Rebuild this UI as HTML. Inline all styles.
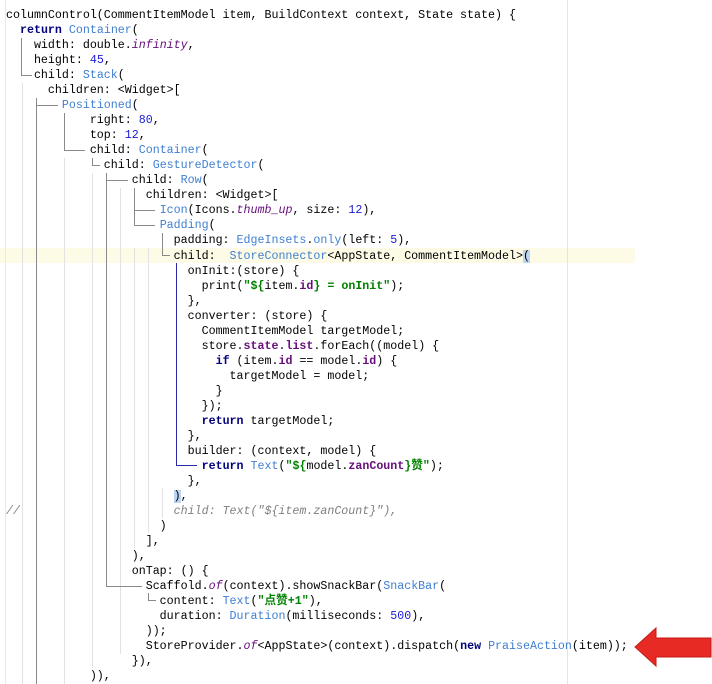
<!DOCTYPE html>
<html><head><meta charset="utf-8"><style>
html,body{margin:0;padding:0;background:#fff;width:712px;height:684px;overflow:hidden;position:relative}
pre{position:absolute;left:6px;top:8px;margin:0;font-family:"Liberation Mono","Noto Sans CJK SC",monospace;font-size:11.65px;line-height:15.03px;color:#000;z-index:2}
.k{color:#000080;font-weight:bold}.c{color:#3f7fd0}.n{color:#1a1ad8}.i{color:#660e7a;font-style:italic}
.f{color:#660e7a;font-weight:bold}.s{color:#008000;font-weight:bold}.cm{color:#808080;font-style:italic}
.b{background:#bcd6f2}
.g{position:absolute;width:1px;background:#e2e2e2;z-index:1}
.d{position:absolute;background:#8a8a8a;z-index:1}
.bl{position:absolute;background:#2a2aa8;z-index:1}
</style></head><body>
<div style="position:absolute;left:0;top:248px;width:635px;height:15px;background:#fdfbe6"></div>
<div style="position:absolute;left:567px;top:0;width:1px;height:684px;background:#e4e4e4"></div>
<div style="position:absolute;left:5px;top:0;width:1px;height:684px;background:#e8e8e8"></div>
<div class="g" style="left:22px;top:83px;height:601px"></div>
<div class="g" style="left:64px;top:158px;height:526px"></div>
<div class="g" style="left:92px;top:173px;height:495px"></div>
<div class="g" style="left:134px;top:248px;height:300px"></div>
<div class="g" style="left:148px;top:248px;height:285px"></div>
<div class="g" style="left:162px;top:488px;height:30px"></div>
<div class="g" style="left:120px;top:188px;height:466px"></div>
<div class="d" style="left:21px;top:38px;width:1px;height:38px"></div>
<div class="d" style="left:21px;top:75px;width:11px;height:1px"></div>
<div class="d" style="left:36px;top:98px;width:1px;height:586px"></div>
<div class="d" style="left:36px;top:105px;width:22px;height:1px"></div>
<div class="d" style="left:64px;top:113px;width:1px;height:38px"></div>
<div class="d" style="left:64px;top:150px;width:21px;height:1px"></div>
<div class="d" style="left:92px;top:158px;width:1px;height:8px"></div>
<div class="d" style="left:92px;top:165px;width:8px;height:1px"></div>
<div class="d" style="left:106px;top:173px;width:1px;height:414px"></div>
<div class="d" style="left:106px;top:180px;width:22px;height:1px"></div>
<div class="d" style="left:106px;top:586px;width:36px;height:1px"></div>
<div class="d" style="left:134px;top:188px;width:1px;height:38px"></div>
<div class="d" style="left:134px;top:210px;width:21px;height:1px"></div>
<div class="d" style="left:134px;top:225px;width:21px;height:1px"></div>
<div class="d" style="left:162px;top:233px;width:1px;height:23px"></div>
<div class="d" style="left:162px;top:255px;width:8px;height:1px"></div>
<div class="d" style="left:148px;top:593px;width:1px;height:8px"></div>
<div class="d" style="left:148px;top:600px;width:8px;height:1px"></div>
<div class="bl" style="left:176px;top:263px;width:1px;height:203px"></div>
<div class="bl" style="left:176px;top:465px;width:21px;height:1px"></div>
<svg style="position:absolute;left:0;top:0" width="712" height="684"><polygon points="635,647 656,628 656,638 711,638 711,657 656,657 656,666" fill="#e82a25" stroke="#c41a16" stroke-width="1"/></svg>
<pre>columnControl(CommentItemModel item, BuildContext context, State state) {
  <span class="k">return</span> <span class="c">Container</span>(
    width: double.<span class="i">infinity</span>,
    height: <span class="n">45</span>,
    child: <span class="c">Stack</span>(
      children: &lt;Widget&gt;[
        <span class="c">Positioned</span>(
            right: <span class="n">80</span>,
            top: <span class="n">12</span>,
            child: <span class="c">Container</span>(
              child: <span class="c">GestureDetector</span>(
                  child: <span class="c">Row</span>(
                    children: &lt;Widget&gt;[
                      <span class="c">Icon</span>(Icons.<span class="i">thumb_up</span>, size: <span class="n">12</span>),
                      <span class="c">Padding</span>(
                        padding: <span class="c">EdgeInsets</span>.<span class="c">only</span>(left: <span class="n">5</span>),
                        child:  <span class="c">StoreConnector</span>&lt;AppState, CommentItemModel&gt;<span class="b">(</span>
                          onInit:(store) {
                            print(<span class="s">"${</span>item.<span class="f">id</span><span class="s">} = onInit"</span>);
                          },
                          converter: (store) {
                            CommentItemModel targetModel;
                            store.<span class="f">state</span>.<span class="f">list</span>.forEach((model) {
                              <span class="k">if</span> (item.<span class="f">id</span> == model.<span class="f">id</span>) {
                                targetModel = model;
                              }
                            });
                            <span class="k">return</span> targetModel;
                          },
                          builder: (context, model) {
                            <span class="k">return</span> <span class="c">Text</span>(<span class="s">"${</span>model.<span class="f">zanCount</span><span class="s">}赞"</span>);
                          },
                        <span class="b">)</span>,
<span class="cm">//                      child: Text("${item.zanCount}"),</span>
                      )
                    ],
                  ),
                  onTap: () {
                    Scaffold.<span class="i">of</span>(context).showSnackBar(<span class="c">SnackBar</span>(
                      content: <span class="c">Text</span>(<span class="s">"点赞+1"</span>),
                      duration: <span class="c">Duration</span>(milliseconds: <span class="n">500</span>),
                    ));
                    StoreProvider.<span class="i">of</span>&lt;AppState&gt;(context).dispatch(<span class="k">new</span> <span class="c">PraiseAction</span>(item));
                  }),
            )),</pre>
</body></html>
